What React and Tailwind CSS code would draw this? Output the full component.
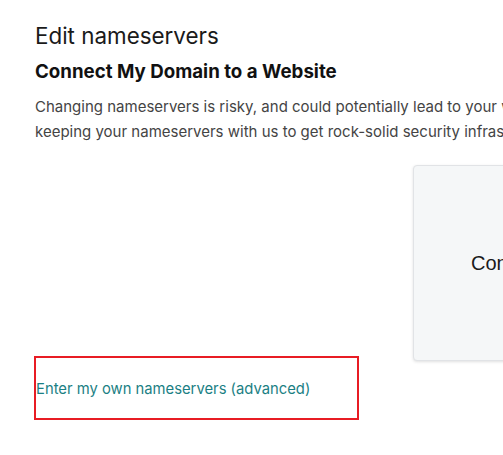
export default function App() {
  return (
    <div className="w-[503px] h-[455px] overflow-hidden bg-white text-[#111111]" style={{ fontFamily: 'Inter, "Open Sans", sans-serif' }}>
      <div className="pl-[35px] pt-[22px]">
        <h1 className="text-[22.4px] leading-[28px] font-normal text-[#1a1a1a]">Edit nameservers</h1>
        <h2 className="mt-[10px] text-[18.7px] leading-[24px] font-bold text-[#111111]">Connect My Domain to a Website</h2>
        <p className="mt-[10px] text-[15px] leading-[25px] text-[#444444] whitespace-nowrap">
          Changing nameservers is risky, and could potentially lead to your website going down. We recommend
          <br />
          keeping your nameservers with us to get rock-solid security infrastructure and reliable uptime.
        </p>
        <div className="mt-[21px] pl-[378px]">
          <div className="w-[300px] h-[196px] rounded-[4px] border border-[#e1e3e6] bg-[#f5f7f8] shadow-[0_1px_3px_rgba(0,0,0,0.12)] flex items-center pl-[57px]">
            <span className="text-[20px] text-[#1a1a1a]" style={{ fontFamily: '"Liberation Sans", Arial, sans-serif' }}>Connect</span>
          </div>
        </div>
        <div className="-mt-[5px] -ml-[1px] w-[325px] h-[64px] border-2 border-[#e81c24] flex items-center">
          <a className="text-[14.8px] text-[#1b7f84] leading-[20px] mt-[2px]">Enter my own nameservers (advanced)</a>
        </div>
      </div>
    </div>
  );
}
